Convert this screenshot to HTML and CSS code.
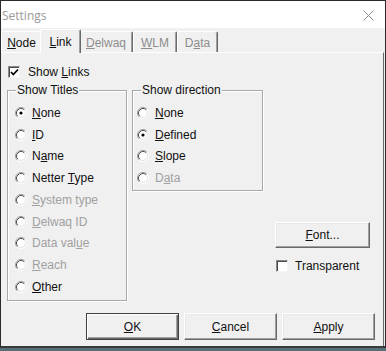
FILE: index.html
```html
<!DOCTYPE html>
<html lang="en">
<head>
    <meta charset="UTF-8">
    <title>Settings</title>
    <link rel="stylesheet" href="styles.css">
</head>
<body>
    <svg class="sprite" width="0" height="0">
        <symbol id="radio" viewBox="0 0 12 12">
            <circle cx="6" cy="6" r="4.5" class="radio-fill"/>
            <path d="M2.11 9.89 A5.5 5.5 0 0 1 9.89 2.11" stroke="#a0a0a0" fill="none"/>
            <path d="M9.89 2.11 A5.5 5.5 0 0 1 2.11 9.89" stroke="#ffffff" fill="none"/>
            <path d="M2.82 9.18 A4.5 4.5 0 0 1 9.18 2.82" stroke="#505050" fill="none"/>
            <path d="M9.18 2.82 A4.5 4.5 0 0 1 2.82 9.18" stroke="#e3e3e3" fill="none"/>
        </symbol>
        <symbol id="radio-on" viewBox="0 0 12 12">
            <use href="#radio"/>
            <circle cx="6" cy="6" r="1.6" fill="#000"/>
        </symbol>
    </svg>

    <div class="window">
        <div class="titlebar">
            <span class="title">Settings</span>
            <svg class="close" width="11" height="11" viewBox="0 0 11 11">
                <path d="M0.5 0.5 L10.5 10.5 M10.5 0.5 L0.5 10.5" stroke="#8c8c8c" stroke-width="1"/>
            </svg>
        </div>

        <div class="tabs">
            <div class="tab tab-node"><u>N</u>ode</div>
            <div class="tab tab-link active"><u>L</u>ink</div>
            <div class="tab tab-delwaq disabled"><u>D</u>elwaq</div>
            <div class="tab tab-wlm disabled"><u>W</u>LM</div>
            <div class="tab tab-data disabled">D<u>a</u>ta</div>
        </div>

        <div class="page">
            <div class="check show-links">
                <span class="box">
                    <svg width="9" height="9" viewBox="0 0 9 9"><path d="M1 4 L3.3 6.5 L8 1.5" stroke="#000" stroke-width="1.8" fill="none"/></svg>
                </span>
                <span>Show <u>L</u>inks</span>
            </div>

            <div class="groups">
                <div class="group titles">
                    <span class="group-title">Show Titles</span>
                    <div class="option"><svg class="radio"><use href="#radio-on"/></svg><span><u>N</u>one</span></div>
                    <div class="option"><svg class="radio"><use href="#radio"/></svg><span><u>I</u>D</span></div>
                    <div class="option"><svg class="radio"><use href="#radio"/></svg><span>N<u>a</u>me</span></div>
                    <div class="option"><svg class="radio"><use href="#radio"/></svg><span>Netter <u>T</u>ype</span></div>
                    <div class="option disabled"><svg class="radio"><use href="#radio"/></svg><span><u>S</u>ystem type</span></div>
                    <div class="option disabled"><svg class="radio"><use href="#radio"/></svg><span><u>D</u>elwaq ID</span></div>
                    <div class="option disabled"><svg class="radio"><use href="#radio"/></svg><span>Data val<u>u</u>e</span></div>
                    <div class="option disabled"><svg class="radio"><use href="#radio"/></svg><span><u>R</u>each</span></div>
                    <div class="option"><svg class="radio"><use href="#radio"/></svg><span><u>O</u>ther</span></div>
                </div>

                <div class="group direction">
                    <span class="group-title">Show direction</span>
                    <div class="option"><svg class="radio"><use href="#radio"/></svg><span><u>N</u>one</span></div>
                    <div class="option"><svg class="radio"><use href="#radio-on"/></svg><span><u>D</u>efined</span></div>
                    <div class="option"><svg class="radio"><use href="#radio"/></svg><span><u>S</u>lope</span></div>
                    <div class="option disabled"><svg class="radio"><use href="#radio"/></svg><span>D<u>a</u>ta</span></div>
                </div>

                <div class="side">
                    <button class="btn font-btn"><u>F</u>ont...</button>
                    <div class="check transparent">
                        <span class="box"></span>
                        <span>Transparent</span>
                    </div>
                </div>
            </div>

            <div class="actions">
                <button class="btn default"><u>O</u>K</button>
                <button class="btn"><u>C</u>ancel</button>
                <button class="btn"><u>A</u>pply</button>
            </div>
        </div>
    </div>
</body>
</html>
```

FILE: styles.css
```css
* {
    margin: 0;
    padding: 0;
    box-sizing: border-box;
}

body {
    background: #56707c;
    font-family: 'Liberation Sans', Arial, sans-serif;
    font-size: 12px;
    color: #111;
    width: 386px;
    height: 351px;
    overflow: hidden;
}

.sprite {
    position: absolute;
}

u {
    text-underline-offset: 1px;
}

.window {
    width: 386px;
    height: 348px;
    background: #f0f0f0;
    border: 1px solid #2b2b2b;
    border-bottom: 2px solid #3a3a3a;
    display: flex;
    flex-direction: column;
}

/* title bar */
.titlebar {
    height: 27px;
    background: #fff;
    display: flex;
    align-items: center;
    justify-content: space-between;
    padding: 0 11px 0 1px;
}

.title {
    font-family: 'Open Sans', 'Noto Sans', sans-serif;
    font-size: 12px;
    color: #999;
    padding-top: 1px;
}

.close {
    margin-top: 1px;
}

/* tabs */
.tabs {
    height: 24px;
    display: flex;
    align-items: flex-end;
}

.tab {
    height: 21px;
    display: flex;
    align-items: center;
    justify-content: center;
    padding-top: 2px;
    border-top: 1px solid #fff;
    border-left: 1px solid #fff;
    border-right: 1px solid #696969;
    border-radius: 2px 2px 0 0;
    box-shadow: inset -1px 0 0 #a0a0a0;
    background: #f0f0f0;
}

.tab.disabled {
    color: #8d8d8d;
}

.tab-node { width: 41px; border-right-color: #e8e8e8; box-shadow: none; }
.tab-link { width: 41px; }
.tab-delwaq { width: 54px; }
.tab-wlm { width: 44px; }
.tab-data { width: 41px; }

.tab.active {
    height: 24px;
    margin: 0 -2px -1px;
    padding-top: 0;
    position: relative;
    z-index: 1;
}

/* page */
.page {
    flex: 1;
    width: 383px;
    border-top: 1px solid #fff;
    border-right: 1px solid #696969;
    padding: 12px 8px 0 6px;
}

.check {
    display: flex;
    align-items: center;
    height: 14px;
}

.box {
    width: 12px;
    height: 12px;
    background: #fff;
    border: 1px solid;
    border-color: #8a8a8a #f4f4f4 #f4f4f4 #8a8a8a;
    box-shadow: inset 1px 1px 0 #4a4a4a;
    margin-right: 8px;
    display: flex;
    align-items: center;
    justify-content: center;
}

.show-links {
    padding-left: 1px;
}

.groups {
    display: flex;
    align-items: flex-start;
    margin-top: 11px;
}

.group {
    position: relative;
    border: 1px solid #a8a8a8;
    box-shadow: 1px 1px 0 #fff, inset 1px 1px 0 #fff;
    padding-top: 11px;
}

.group-title {
    position: absolute;
    top: -8px;
    left: 8px;
    padding: 0 1px;
    background: #f0f0f0;
    line-height: 14px;
}

.titles {
    width: 120px;
    height: 211px;
    padding-left: 7px;
}

.direction {
    width: 131px;
    height: 101px;
    margin-left: 5px;
    padding-left: 4px;
}

.option {
    height: 21.75px;
    display: flex;
    align-items: center;
}

.radio {
    width: 12px;
    height: 12px;
    margin-right: 5px;
    flex: none;
}

.direction .radio {
    margin-right: 6px;
}

.radio-fill {
    fill: #fff;
}

.option.disabled {
    color: #a0a0a0;
}

.option.disabled .radio {
    --dummy: 0;
}

.side {
    margin-left: 12px;
    display: flex;
    flex-direction: column;
}

.btn {
    font-family: 'Liberation Sans', Arial, sans-serif;
    font-size: 12px;
    color: #111;
    background: #f0f0f0;
    border: 1px solid;
    border-color: #fff #696969 #696969 #fff;
    box-shadow: inset -1px -1px 0 #a0a0a0, inset 1px 1px 0 #e8e8e8;
}

.btn.default {
    border-color: #404040;
    box-shadow: inset 1px 1px 0 #fff, inset -1px -1px 0 #696969, inset -2px -2px 0 #a0a0a0;
}

.font-btn {
    width: 95px;
    height: 26px;
    margin-top: 132px;
}

.transparent {
    margin-top: 11px;
    margin-left: 1px;
}

.transparent .box {
    margin-right: 7px;
}

.actions {
    display: flex;
    justify-content: flex-end;
    gap: 5px;
    margin-top: 12px;
}

.actions .btn {
    width: 93px;
    height: 27px;
}
```
